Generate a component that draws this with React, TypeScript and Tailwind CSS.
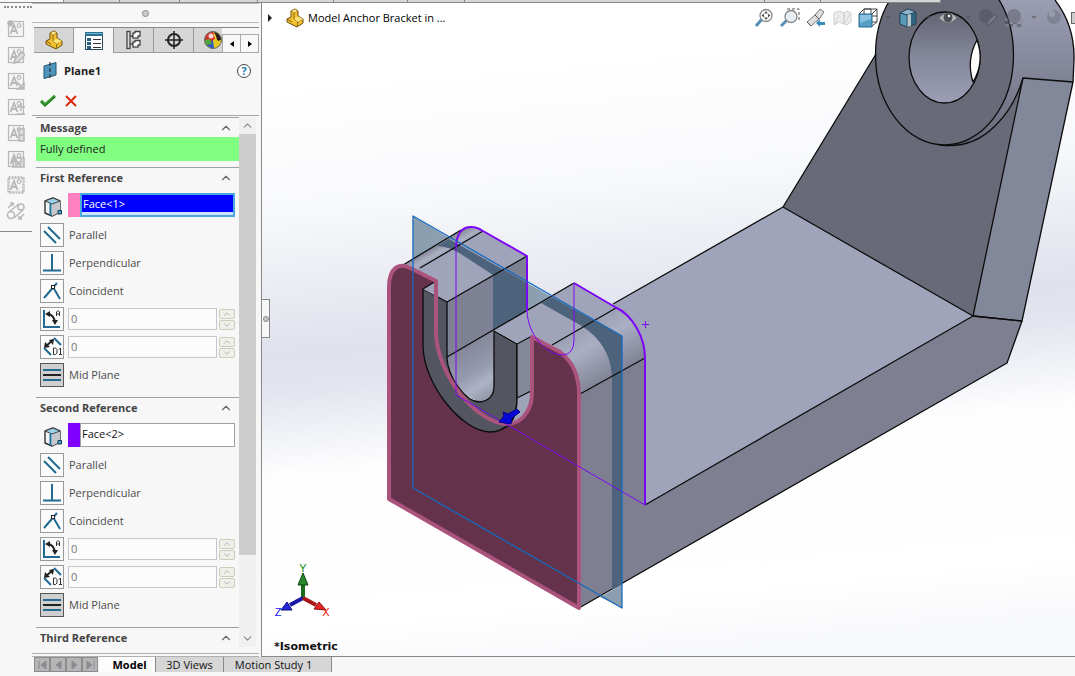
import React from 'react';
import { ChevronUp, ChevronDown } from 'lucide-react';

type RelationKind = 'parallel' | 'perpendicular' | 'coincident' | 'angle' | 'distance' | 'mid';

interface ReferenceSectionProps {
  title: string;
  face: string;
  swatch: string;
  active?: boolean;
}

const PartIcon: React.FC = () => (
  <svg width="20" height="20" viewBox="0 0 20 20" strokeLinejoin="round" aria-hidden="true">
    <path d="M2 11L6 9V3L10 1L13 3V8L18 11V15L12 19L2 14Z" fill="#f2c230" stroke="#6b4a08" />
    <path d="M6 3L10 1L13 3L9 5Z" fill="#ffe88a" stroke="#8a6510" strokeWidth=".6" />
    <path d="M9 5V11L13 14L18 11M13 14L12 19M2 11L7 14" fill="none" stroke="#8a6510" />
    <path d="M9 11L13 8.500L18 11L13 14Z" fill="#ffe277" />
  </svg>
);

const PropertyIcon: React.FC = () => (
  <svg width="20" height="20" viewBox="0 0 20 20" aria-hidden="true">
    <rect x="1.500" y="1.500" width="17" height="17" fill="#fff" stroke="#254a60" />
    <path d="M1 1H19V5H1Z" fill="#2b6f92" />
    <path d="M2 2H18V3H2Z" fill="#6fb4d4" />
    <path d="M3 7H7V10H3ZM3 11H7V14H3ZM3 15H7V18H3Z" fill="#2b5f80" />
    <path d="M9 8.500H17M9 12.500H17M9 16.500H17" stroke="#333" />
  </svg>
);

const ConfigIcon: React.FC = () => (
  <svg width="20" height="20" viewBox="0 0 20 20" fill="#fff" stroke="#444" strokeWidth="1.300" aria-hidden="true">
    <path d="M6 6H10M6 14H9" fill="none" />
    <rect x="3" y="1.500" width="3" height="17" fill="#ddd" />
    <rect x="9" y="3" width="5" height="5" />
    <path d="M11 3V1.500H16V6H14" />
    <rect x="9" y="12" width="5" height="5" />
    <path d="M11 12V10.500H16V15H14" />
  </svg>
);

const TargetIcon: React.FC = () => (
  <svg width="20" height="20" viewBox="0 0 20 20" fill="none" stroke="#222" strokeWidth="2" aria-hidden="true">
    <circle cx="10" cy="10" r="6" />
    <path d="M10 1V19M1 10H19" strokeWidth="1.500" />
  </svg>
);

const AppearanceIcon: React.FC = () => (
  <svg width="20" height="20" viewBox="0 0 20 20" aria-hidden="true">
    <circle cx="10" cy="10" r="8.500" fill="#f0d531" />
    <path d="M11 10L18 10Q18 17 11 18.500Z" fill="#e8c81c" />
    <path d="M2 10L10 10L11 18.500Q3 18 2 10Z" fill="#2a56c9" />
    <path d="M1.500 10Q2 2 10 1.500L12 9L7 12Z" fill="#d63228" />
    <path d="M1.500 10L7 9L9 14L3 15Z" fill="#4fa836" />
    <path d="M10 1.500Q17 3 18.500 9Q16 12 14 10Q13 4 10 1.500Z" fill="#2b1b1b" />
    <circle cx="10" cy="10" r="8.500" fill="none" stroke="#666" />
    <circle cx="8" cy="6" r="2.500" fill="#fff" opacity=".8" />
  </svg>
);

const PlaneIcon: React.FC = () => (
  <svg width="16" height="20" viewBox="0 0 16 20" aria-hidden="true">
    <path d="M2 5L14 1.500V14L2 17.500Z" fill="#4f95bb" stroke="#1d5878" />
    <path d="M8 1V19" stroke="#222" strokeDasharray="4 2" />
  </svg>
);

const FaceIcon: React.FC = () => (
  <svg width="18" height="20" viewBox="0 0 18 20" strokeLinejoin="round" aria-hidden="true">
    <path d="M1 4L9 1L16 4V15L8 19L1 16Z" fill="#f2f3f4" stroke="#333" strokeWidth="1.400" />
    <path d="M8 7L16 4V15L8 19Z" fill="#c4c8cc" />
    <path d="M1 4L9 1L16 4L8 7Z" fill="#9bd0ea" stroke="#444" />
    <path d="M6.500 6.500V18.500" stroke="#1e6f9b" strokeWidth="2" />
    <rect x="14" y="13.500" width="3.500" height="3.500" fill="#4fa3cf" stroke="#123c55" />
  </svg>
);

const RelationIcon: React.FC<{ kind: RelationKind }> = ({ kind }) => (
  <svg width="22" height="22" viewBox="0 0 22 22" fill="none" stroke="#216b92" strokeWidth="2" aria-hidden="true">
    {kind === 'parallel' && <path d="M3 7L15 19M7 3L19 15" />}
    {kind === 'perpendicular' && <path d="M11 2V18M2 18.500H20" />}
    {kind === 'coincident' && (
      <>
        <path d="M3 18L16 3M12 7L19 19" />
        <rect x="10.500" y="5.500" width="3" height="3" stroke="#222" strokeWidth="1" fill="#fff" />
      </>
    )}
    {kind === 'angle' && (
      <>
        <path d="M3 2V19H19" />
        <path d="M6 6Q13 6 14 15" stroke="#222" />
        <path d="M4 6L9 3V9ZM14 17L11 12H17Z" fill="#222" stroke="none" />
        <path d="M15.500 8V4L17 2.500L18.500 4V8M15.500 6H18.500" stroke="#333" strokeWidth="1" />
      </>
    )}
    {kind === 'distance' && (
      <>
        <path d="M13 2L20 9M3 12L10 19" />
        <path d="M5 10L12 4" stroke="#222" />
        <path d="M3 12L4 6L9 11ZM13 3L8 4L12 9Z" fill="#222" stroke="none" />
        <path d="M12.500 12V18.500H14.500L16 17V13.500L14.500 12ZM18 13.500L19.500 12V18.500M18 18.500H21" stroke="#333" strokeWidth="1" />
      </>
    )}
    {kind === 'mid' && (
      <>
        <path d="M2 6H20M2 16H20" />
        <path d="M2 11H20" stroke="#222" />
      </>
    )}
  </svg>
);

// grey annotation tools, one overlay drawing per button
const RAIL_TOOLS = [
  { name: 'New style', d: 'M1 1L6 6M6 1L1 6M3.500 0V7M0 3.500H7' },
  { name: 'Edit style', d: 'M7 17L8 13L15 6L18 9L11 16Z' },
  { name: 'Apply style', d: 'M10 10L17 17M17 11V17H11Z' },
  { name: 'Add style', d: 'M14 5V13M10 9H18M10 16H18' },
  { name: 'Style status', d: 'M12 5H17V17H12ZM12 11H17' },
  { name: 'Save style', d: 'M6 8H17V17H6ZM8 8V12H14V8M9 17V14H13V17' },
  { name: 'Frame style', d: '' },
];

const RailIcon: React.FC<{ d: string }> = ({ d }) => (
  <svg width="18" height="18" viewBox="0 0 18 18" fill="none" stroke="#b8b8b8" strokeWidth="1.200" aria-hidden="true">
    <rect x="1.500" y="1.500" width="15" height="15" fill="#f4f4f4" strokeWidth={d ? 1.2 : 2.5} strokeDasharray={d ? undefined : '2 1'} />
    <path d="M3.500 14L7 5L10.500 14M5 11H9" strokeWidth="1.800" />
    <circle cx="12" cy="5.500" r="1.800" />
    {d && <path d={d} fill="#dcdcdc" strokeWidth="1.500" />}
  </svg>
);

const ToolRail: React.FC = () => (
  <nav aria-label="Annotation styles" className="w-8 shrink-0 pt-[6px]">
    <div className="ml-1 border-t-2 border-dotted border-[#8c8c8c]" />
    <div className="flex flex-col items-center gap-2 pt-3 pb-[11px] border-b border-[#888]">
      {RAIL_TOOLS.map((tool) => (
        <button key={tool.name} aria-label={tool.name}>
          <RailIcon d={tool.d} />
        </button>
      ))}
      <button aria-label="Belt and chain">
        <svg width="20" height="18" viewBox="0 0 20 18" fill="none" stroke="#b8b8b8" strokeWidth="1.500" aria-hidden="true">
          <circle cx="5" cy="13" r="3.500" />
          <circle cx="15" cy="5" r="3" />
          <path d="M3 10L13 2M8 16L17 8M2 6L7 1M4 1H7V4M18 12L13 17M13 14V17H16" />
        </svg>
      </button>
    </div>
  </nav>
);

const PANEL_TABS = [
  { name: 'FeatureManager', icon: <PartIcon /> },
  { name: 'PropertyManager', icon: <PropertyIcon /> },
  { name: 'ConfigurationManager', icon: <ConfigIcon /> },
  { name: 'DimXpertManager', icon: <TargetIcon /> },
];

const SectionHeader: React.FC<{ title: string }> = ({ title }) => (
  <button className="flex w-full items-center justify-between h-5 pl-1 pr-1.5 border-t border-[#a0a0a0] font-bold text-[#444]">
    {title}
    <ChevronUp size={14} strokeWidth={2} color="#666" />
  </button>
);

const ToolBox: React.FC<{ kind: RelationKind; pressed?: boolean }> = ({ kind, pressed }) => (
  <span className={`flex shrink-0 w-6 h-6 items-center justify-center border ${pressed ? 'border-[#555] bg-[#cfcfcf]' : 'border-[#999] bg-[#fbfbfb]'}`}>
    <RelationIcon kind={kind} />
  </span>
);

const Relation: React.FC<{ kind: RelationKind; label: string; pressed?: boolean }> = ({ kind, label, pressed }) => (
  <button aria-pressed={!!pressed} className="flex w-full items-center gap-[5px] text-[#4c4c4c]">
    <ToolBox kind={kind} pressed={pressed} />
    {label}
  </button>
);

const Measure: React.FC<{ kind: RelationKind; label: string }> = ({ kind, label }) => (
  <div className="flex h-6 items-center">
    <button aria-label={label}>
      <ToolBox kind={kind} />
    </button>
    <input
      aria-label={`${label} value`}
      defaultValue="0"
      className="ml-1 h-[22px] min-w-0 flex-1 border border-[#c6c6cc] bg-[#fcfcfc] px-0.5 pb-0.5 text-[#777]"
    />
    <div className="ml-0.5 flex w-4 flex-col gap-px">
      <button aria-label={`Increase ${label}`} className="flex h-[10px] items-center justify-center rounded-xs border border-[#cdcdbb] bg-[#f0f0ea]">
        <ChevronUp size={10} color="#aaa" />
      </button>
      <button aria-label={`Decrease ${label}`} className="flex h-[10px] items-center justify-center rounded-xs border border-[#cdcdbb] bg-[#f0f0ea]">
        <ChevronDown size={10} color="#aaa" />
      </button>
    </div>
  </div>
);

const ReferenceSection: React.FC<ReferenceSectionProps> = ({ title, face, swatch, active }) => (
  <section className="pb-[10px]">
    <SectionHeader title={title} />
    <div className="flex flex-col gap-1 pl-1 pr-1 pt-1.5">
      <div className="mb-0.5 flex h-6">
        <span className="flex w-7 items-end pl-1">
          <FaceIcon />
        </span>
        <span className={`w-3 ${swatch}`} />
        <div className={`min-w-0 flex-1 ${active ? 'border-2 border-[#4aa8e0] bg-[#cfe3f8]' : 'border border-[#a0a0a8] bg-white py-px'}`}>
          <input
            aria-label={`${title} selection`}
            defaultValue={face}
            className={`block h-[17px] w-full px-px ${active ? 'bg-[#0000ff] text-white' : 'bg-white text-[#111]'}`}
          />
        </div>
      </div>
      <Relation kind="parallel" label="Parallel" />
      <Relation kind="perpendicular" label="Perpendicular" />
      <Relation kind="coincident" label="Coincident" />
      <Measure kind="angle" label="Angle" />
      <Measure kind="distance" label="Distance" />
      <Relation kind="mid" label="Mid Plane" pressed />
    </div>
  </section>
);

const PropertyPanel: React.FC = () => (
  <aside className="flex w-[230px] shrink-0 flex-col border-r border-[#888] pt-[3px]">
    <div className="mr-0.5 flex h-5 items-center justify-center border-y border-[#b5b9ba]">
      <span className="h-[7px] w-[7px] rounded-full border border-[#888] bg-[#ccc]" />
    </div>
    <div className="ml-0.5 mr-0.5 mt-1 flex h-[26px] border-t border-[#888]">
      {PANEL_TABS.map((tab, index) => (
        <button
          key={tab.name}
          aria-label={tab.name}
          className={`flex w-10 shrink-0 items-center justify-center border-r border-[#999] ${index === 1 ? 'bg-[#f7f7f7]' : 'border-b bg-[#d6d6d6]'}`}
        >
          {tab.icon}
        </button>
      ))}
      <button aria-label="DisplayManager" className="flex min-w-0 flex-1 items-center overflow-hidden border-b border-[#999] bg-[#d6d6d6] pl-[9px]">
        <span className="shrink-0"><AppearanceIcon /></span>
      </button>
      <button aria-label="Previous tabs" className="mt-1.5 flex w-[19px] shrink-0 items-center justify-center border border-[#aaa] bg-[#f7f7f7]">
        <svg width="4" height="6" viewBox="0 0 4 6" aria-hidden="true"><path d="M4 0V6L0 3Z" /></svg>
      </button>
      <button aria-label="Next tabs" className="mt-1.5 flex w-[18px] shrink-0 items-center justify-center border border-l-0 border-[#aaa] bg-[#f7f7f7]">
        <svg width="4" height="6" viewBox="0 0 4 6" aria-hidden="true"><path d="M0 0V6L4 3Z" /></svg>
      </button>
    </div>
    <div className="flex h-[35px] items-center gap-1.5 px-[10px]">
      <PlaneIcon />
      <h1 className="flex-1 font-bold text-[#222]">Plane1</h1>
      <button aria-label="Help" className="flex h-[14px] w-[14px] items-center justify-center rounded-full border border-[#444] bg-white font-bold leading-none text-[#217aa6]">?</button>
    </div>
    <div className="mr-0.5 flex h-7 items-center gap-2 border-b border-[#a5a5a5] pb-0.5 pl-2">
      <button aria-label="OK">
        <svg width="16" height="14" viewBox="0 0 16 14" aria-hidden="true">
          <path d="M1 7L5 11L15 2" fill="none" stroke="#1f7d1b" strokeWidth="3" />
          <path d="M1.500 6.500L5 10L14.500 1.500" fill="none" stroke="#3f9f2c" strokeWidth="1.500" />
        </svg>
      </button>
      <button aria-label="Cancel">
        <svg width="14" height="14" viewBox="0 0 14 14" aria-hidden="true">
          <path d="M2 2L12 12M12 2L2 12" fill="none" stroke="#dc2a0c" strokeWidth="2" />
        </svg>
      </button>
    </div>
    <div className="mb-1.5 mt-px flex min-h-0 flex-1 pl-1">
      <div className="h-full min-w-0 flex-1 overflow-hidden">
        <section className="pb-1.5">
          <SectionHeader title="Message" />
          <p className="flex h-6 items-center bg-[#80ff80] pl-1 text-[#222]">Fully defined</p>
        </section>
        <ReferenceSection title="First Reference" face="Face<1>" swatch="bg-[#ff80c0]" active />
        <ReferenceSection title="Second Reference" face="Face<2>" swatch="bg-[#8000ff]" />
        <SectionHeader title="Third Reference" />
      </div>
      <div className="mr-[5px] flex w-[17px] shrink-0 flex-col items-center bg-[#f0f0f0]">
        <ChevronUp size={13} color="#888" className="my-0.5 shrink-0" />
        <div className="w-full flex-1 bg-[#cdcdcd]" />
        <div className="flex h-[92px] items-end">
          <ChevronDown size={13} color="#888" className="mb-0.5" />
        </div>
      </div>
    </div>
    <div className="mr-0.5 h-1 border-y border-[#b0b0b0]" />
  </aside>
);

const Bracket: React.FC = () => (
  <svg
    className="absolute inset-0 h-full w-full"
    viewBox="262 0 813 656"
    preserveAspectRatio="xMinYMin slice"
    strokeLinejoin="round"
    role="img"
    aria-label="Anchor bracket with reference plane"
  >
    <defs>
      <linearGradient id="sky" gradientUnits="userSpaceOnUse" x1="600" y1="60" x2="654" y2="656">
        <stop offset="0" stopColor="#ffffff" />
        <stop offset=".2" stopColor="#f8f9fb" />
        <stop offset=".44" stopColor="#dfe2ec" />
        <stop offset=".5" stopColor="#e2e5ee" />
        <stop offset=".64" stopColor="#fdfdfe" />
        <stop offset=".9" stopColor="#ffffff" />
        <stop offset="1" stopColor="#f7f8fa" />
      </linearGradient>
      <linearGradient id="bore" x1="0" y1="0" x2="0" y2="1">
        <stop offset="0" stopColor="#626473" />
        <stop offset=".5" stopColor="#85889c" />
        <stop offset="1" stopColor="#9b9eb5" />
      </linearGradient>
      <linearGradient id="rim" gradientUnits="userSpaceOnUse" x1="0" y1="0" x2="0" y2="145">
        <stop offset="0" stopColor="#9b9eb3" />
        <stop offset=".5" stopColor="#838699" />
        <stop offset="1" stopColor="#666878" />
      </linearGradient>
      <linearGradient id="slot" gradientUnits="userSpaceOnUse" x1="458" y1="350" x2="490" y2="402">
        <stop offset="0" stopColor="#84879a" />
        <stop offset=".45" stopColor="#969aae" />
        <stop offset=".68" stopColor="#aeb2c6" />
        <stop offset="1" stopColor="#8b8fa2" />
      </linearGradient>
      <linearGradient id="fillet" gradientUnits="userSpaceOnUse" x1="585" y1="325" x2="616" y2="376">
        <stop offset="0" stopColor="#9da0b5" />
        <stop offset=".35" stopColor="#abafc3" />
        <stop offset="1" stopColor="#7f8194" />
      </linearGradient>
      <linearGradient id="corner" gradientUnits="userSpaceOnUse" x1="430" y1="246" x2="438" y2="260">
        <stop offset="0" stopColor="#777a8c" />
        <stop offset=".6" stopColor="#abafc2" />
        <stop offset="1" stopColor="#a0a3b8" />
      </linearGradient>
    </defs>

    <rect x="262" y="0" width="813" height="660" fill="url(#sky)" />

    {/* Base and upright arm */}
    <g stroke="#0c0c0c" strokeWidth="1.300">
      <path d="M579 608L1007 363L1022 321L973 316L645 505V357L579 394Z" fill="#7e8092" stroke="none" />
      <path d="M645 505L973 316L783 207L613 304L645 357Z" fill="#a0a4ba" stroke="none" />
      <path d="M876 54L783 207L973 316L1023 78L990 0H900Z" fill="#686a78" stroke="none" />
      <path d="M998 0H1055Q1075 26 1074 60L1073 82L1023 78Q1014 108 995 126Q972 146 944 145L1000 100Z" fill="url(#rim)" stroke="none" />
      <path d="M1023 78L1073 82L1022 321L973 316Z" fill="#83879a" />
      <path d="M944 145Q970 139 990 118Q972 140 962 146Z" fill="#555766" stroke="none" />
      <path d="M1055 0Q1075 26 1074 60L1073 82M1023 78Q1014 108 995 126Q972 149 940 145" fill="none" />
      <ellipse cx="944.500" cy="55" rx="69" ry="90" fill="#686a78" />
      <ellipse cx="944.500" cy="57.500" rx="35.500" ry="45.500" fill="url(#bore)" />
      <path d="M977 40Q966 60 973 82Q985 62 977 40Z" fill="#fdfdfe" />
      <path d="M876 54L783 207M613 304L783 207L973 316L1022 321M645 505L973 316M579 608L1007 363L1022 321" fill="none" />
    </g>

    {/* Lug with the round slot */}
    <path d="M403 265L461 230Q471 225 483 231L420 268L436 281Z" fill="url(#corner)" />
    <path d="M418 268L483 231L527 256L447 302L423 289L436 281Z" fill="#a0a4ba" />
    <path d="M447 302L527 256V311L447 358Z" fill="#7e8194" />
    <path d="M447 357L494 330V386Q493 402 480 402Q447 390 447 357Z" fill="url(#slot)" />
    <path d="M494 330L574 283L616 308L552 346L534 336L517 343Z" fill="#a0a4ba" />
    <path d="M552 345L616 308C632 314 645 338 645 358L580 394Q578 360 552 345Z" fill="url(#fillet)" />
    <path d="M580 394L645 358V505L580 468Z" fill="#7e8092" />

    {/* Section through the body where the plane is in front of it */}
    <g fill="#4d637c">
      <path d="M437 246L449 239L527 283V311L493 330V275L467 258Q450 246 437 246Z" />
      <path d="M541 303L552 297L622 336V585L612 590V377C611 350 595 334 580 325Z" />
    </g>
    <g fill="#8c9fb1">
      <path d="M413 216L449 238L413 259Z" />
      <path d="M527 283L552 297L527 311Z" />
      <path d="M600 597L622 585V608Z" />
    </g>

    {/* Selected front face */}
    <path
      d="M389 499V287C389 268 399 262 410 268L436 281V333C437 375 477 424 507 424C522 424 532 410 532 393V337L560 352C573 362 579 376 579 394V608Z"
      fill="#64324a"
    />
    <path
      d="M423 289L447 302V358C448 377 465 402 480 402Q494 400 494 386V331L517 344V398C517 418 507 432 490 432C463 432 423 385 423 345Z"
      fill="#535560"
      stroke="#0c0c0c"
      strokeWidth="1.300"
    />
    <path d="M423 289L436 281V296Z" fill="#a0a4ba" />
    <path d="M517 344V398C517 412 514 420 508 425C522 424 531 410 531 393V337Z" fill="#85889b" />
    <path d="M517 398L531 391C531 412 522 424 508 425C514 420 517 412 517 398Z" fill="#9fa3b7" />

    <g stroke="#0c0c0c" strokeWidth="1.300" fill="none">
      <path d="M403 265L461 230M420 268L483 231M447 302L527 256M447 357L574 283M552 345L616 308M580 394L645 358M423 289L436 281M517 344L532 336M517 344V398C517 412 513 422 507 427M517 398L531 391" />
    </g>

    <path
      d="M389 499V287C389 268 399 262 410 268L436 281V333C437 375 477 424 507 424C522 424 532 410 532 393V337L560 352C573 362 579 376 579 394V608Z"
      fill="none"
      stroke="#a9537d"
      strokeWidth="4"
    />

    {/* Opposite face outline */}
    <g fill="none" stroke="#7d06f5">
      <path d="M456 247V395L645 505M527 311C528 335 546 355 563 355Q574 354 574 340V283" strokeWidth="1" />
      <path d="M456 247Q457 227 471 227Q477 227 483 231L527 256V311M574 283L615 307C633 315 645 338 645 358V505" strokeWidth="2" />
      <path d="M642 324.500H649M645.500 321V328" strokeWidth="1" />
    </g>

    <path d="M413 216L622 336V608L413 488Z" fill="none" stroke="#1569bd" strokeWidth="1.300" />
    <path d="M499 422L504 416L503 412L508 414L517 409L520 412L512 418L511 424Z" fill="#0808d8" stroke="#00008c" />

    {/* Triad */}
    <g strokeWidth="4">
      <path d="M303 598V582" stroke="#176b1b" />
      <path d="M303 573L298 585H308Z" fill="#26872b" stroke="#0e4512" strokeWidth="1" />
      <path d="M303 598L290 605" stroke="#1717a8" />
      <path d="M281 610L287 602L292 610Z" fill="#2626d8" stroke="#10107c" strokeWidth="1" />
      <path d="M303 598L316 605" stroke="#a91717" />
      <path d="M326 610L319 602L314 609Z" fill="#e32828" stroke="#861010" strokeWidth="1" />
    </g>
    <g fontFamily="Liberation Sans, sans-serif" fontSize="11" textAnchor="middle">
      <text x="303" y="572" fill="#128a12">Y</text>
      <text x="278" y="616" fill="#1111ee">Z</text>
      <text x="326" y="616" fill="#ee1111">X</text>
    </g>
  </svg>
);

const Caret: React.FC = () => (
  <span className="flex w-[14px] justify-center">
    <svg width="6" height="4" viewBox="0 0 6 4" aria-hidden="true"><path d="M0 0H6L3 3Z" fill="#555" opacity=".6" /></svg>
  </span>
);

const ViewTool: React.FC<{ name: string; children: React.ReactNode }> = ({ name, children }) => (
  <button aria-label={name} className="flex w-[26px] shrink-0 justify-center">
    <svg width="20" height="20" viewBox="0 0 20 20" fill="none" aria-hidden="true">{children}</svg>
  </button>
);

const ViewToolbar: React.FC = () => (
  <div className="flex items-center">
    <ViewTool name="Zoom to fit">
      <path d="M2 18L8 11" stroke="#5590b5" strokeWidth="3" />
      <circle cx="12" cy="7.500" r="6" fill="#fff" stroke="#888" strokeWidth="1.300" />
      <path d="M12 3L14 5.500H10ZM12 12L14 9.500H10ZM7.500 7.500L10 5.500V9.500ZM16.500 7.500L14 5.500V9.500Z" fill="#555" />
    </ViewTool>
    <ViewTool name="Zoom to area">
      <path d="M7 1H19V14" stroke="#555" strokeDasharray="3 2" />
      <path d="M1 18L7 12" stroke="#5590b5" strokeWidth="3" />
      <circle cx="11" cy="8.500" r="6" fill="#e7eef3" stroke="#888" strokeWidth="1.300" />
    </ViewTool>
    <ViewTool name="Previous view">
      <path d="M1 14L9 7L14 1L18 4L14 10L5 18Z" fill="#ddd" stroke="#777" />
      <path d="M9 7L13 11M1 14L5 18" stroke="#555" />
      <path d="M10 15L14 11V14H19V17H14V19Z" fill="#3a8dbc" />
    </ViewTool>
    <ViewTool name="Section view">
      <path d="M2 5L7 3L12 5V16L7 14L2 17ZM12 5L15 3L19 5V14L15 17L12 16Z" fill="#ececec" stroke="#cfcfcf" />
      <path d="M3 16L7 7M13 15L18 6" stroke="#d5d5d5" />
    </ViewTool>
    <ViewTool name="View orientation">
      <path d="M6 6V1H19V14H14M6 1H13V6M1 6L6 1M14 6L19 1M14 18L19 14M13 8H19" stroke="#444" />
      <path d="M1 6H14V19H1Z" fill="#579fc6" stroke="#25668d" />
      <path d="M2 7H13V11L2 15Z" fill="#8ac2df" />
    </ViewTool>
    <Caret />
    <ViewTool name="Display style">
      <path d="M2 5L10 1L18 4V16L9 19L2 16Z" fill="#2d6482" stroke="#304450" />
      <path d="M2 5L10 1L18 4L9 7Z" fill="#8eb6c8" stroke="#274a5e" />
      <path d="M9 7L13 6V18L9 19Z" fill="#b9c4cb" />
      <path d="M2 5L9 7V19L2 16Z" fill="#5a9abb" stroke="#274a5e" />
    </ViewTool>
    <Caret />
    <ViewTool name="Hide and show items">
      <path d="M1 10Q10 0 19 10Q10 19 1 10Z" fill="#bdbdc3" stroke="#777" />
      <circle cx="10" cy="9.500" r="4.500" fill="#4c4d54" />
      <circle cx="11" cy="8" r="1.300" fill="#eee" />
    </ViewTool>
    <Caret />
    <ViewTool name="Edit appearance">
      <g opacity=".55">
        <circle cx="8" cy="8" r="7" fill="#50525e" />
        <path d="M8 18L10 13L17 6L19 9L12 16Z" fill="#81838d" stroke="#4a4b55" />
      </g>
    </ViewTool>
    <ViewTool name="Apply scene">
      <g opacity=".5">
        <path d="M1 10H19V19H1Z" fill="#8d8f9b" />
        <path d="M1 13H5V16H1ZM9 13H13V16H9ZM5 16H9V19H5ZM13 16H17V19H13Z" fill="#444652" />
        <circle cx="10" cy="8" r="7" fill="#5c5e6c" />
      </g>
    </ViewTool>
    <Caret />
    <ViewTool name="View settings">
      <circle cx="10" cy="9" r="7" fill="#787b8d" opacity=".7" />
      <circle cx="8" cy="6" r="3" fill="#a3a6b7" opacity=".7" />
    </ViewTool>
    <span className="ml-1 h-3 w-1 border border-r-0 border-[#666] bg-[#ccc]" />
  </div>
);

const Viewport: React.FC = () => (
  <main className="relative flex min-w-0 flex-1 flex-col overflow-hidden border-b border-[#888]">
    <Bracket />
    <div className="relative flex items-center justify-between pt-2">
      <button className="flex items-center text-black">
        <svg width="5" height="8" viewBox="0 0 5 8" className="ml-1.5" aria-hidden="true"><path d="M0 0V8L4 4Z" fill="#222" /></svg>
        <span className="ml-3"><PartIcon /></span>
        <span className="ml-[3px]">Model Anchor Bracket in ...</span>
      </button>
      <ViewToolbar />
    </div>
    <button aria-label="Collapse panel" className="absolute left-0 top-[299px] flex h-[39px] w-2 items-center justify-center border border-l-0 border-[#888] bg-[#f7f7f7]">
      <span className="h-1.5 w-1.5 shrink-0 rounded-full border border-[#888] bg-[#ccc]" />
    </button>
    <p className="relative mt-auto pb-px pl-3 font-['DejaVu_Sans'] text-[11px] font-bold text-[#111]">*Isometric</p>
  </main>
);

const NAV_SHAPES = ['M3 2V10M10 2V10L5 6Z', 'M9 2V10L4 6Z', 'M4 2V10L9 6Z', 'M10 2V10M3 2V10L8 6Z'];
const NAV_NAMES = ['First tab', 'Previous tab', 'Next tab', 'Last tab'];

const BottomTabs: React.FC = () => (
  <footer className="pb-1 pl-[34px]">
    <div className="flex h-[15px]">
      {NAV_SHAPES.map((d, index) => (
        <button key={d} aria-label={NAV_NAMES[index]} className="flex w-4 items-center justify-center border border-[#8c8c8c] bg-[#b5b5b8]">
          <svg width="12" height="12" viewBox="0 0 12 12" fill="#8b8b8f" stroke="#8b8b8f" aria-hidden="true"><path d={d} /></svg>
        </button>
      ))}
      <button className="ml-0.5 w-14 border-r border-[#888] bg-[#fcfcfc] pl-1 text-center leading-3 font-bold text-black">Model</button>
      <button className="w-[68px] border-r border-[#888] bg-[#d6d6d6] leading-3 text-[#111]">3D Views</button>
      <button className="w-[108px] border-r border-[#888] bg-[#d6d6d6] pr-2 leading-3 text-[#111]">Motion Study 1</button>
    </div>
  </footer>
);

// lower edge of the command ribbon
const RibbonEdge: React.FC = () => (
  <div className="absolute left-0 top-0 z-10 flex h-[3px] w-[941px] max-w-full border-b border-[#888] bg-[#d6d6d6]">
    <span className="w-16 border-r border-[#888] bg-[#f7f7f7]" />
    <span className="w-14 border-r border-[#888]" />
    <span className="w-15 border-r border-[#888]" />
    <span className="w-[78px] border-r border-[#888]" />
    <span className="w-[76px] border-r border-[#888]" />
    <span className="w-[74px] border-r border-[#888]" />
    <span className="w-[57px] border-r border-[#888]" />
    <span className="w-[300px] border-r border-[#888]" />
    <span className="w-14 border-r border-[#888]" />
    <span className="flex-1 border-r border-[#888]" />
  </div>
);

const App: React.FC = () => (
  <div className="relative flex h-screen flex-col overflow-hidden bg-[#f7f7f7] font-['Open_Sans',sans-serif] text-[11px] leading-4">
    <RibbonEdge />
    <div className="flex min-h-0 flex-1">
      <ToolRail />
      <PropertyPanel />
      <Viewport />
    </div>
    <BottomTabs />
  </div>
);

export default App;
